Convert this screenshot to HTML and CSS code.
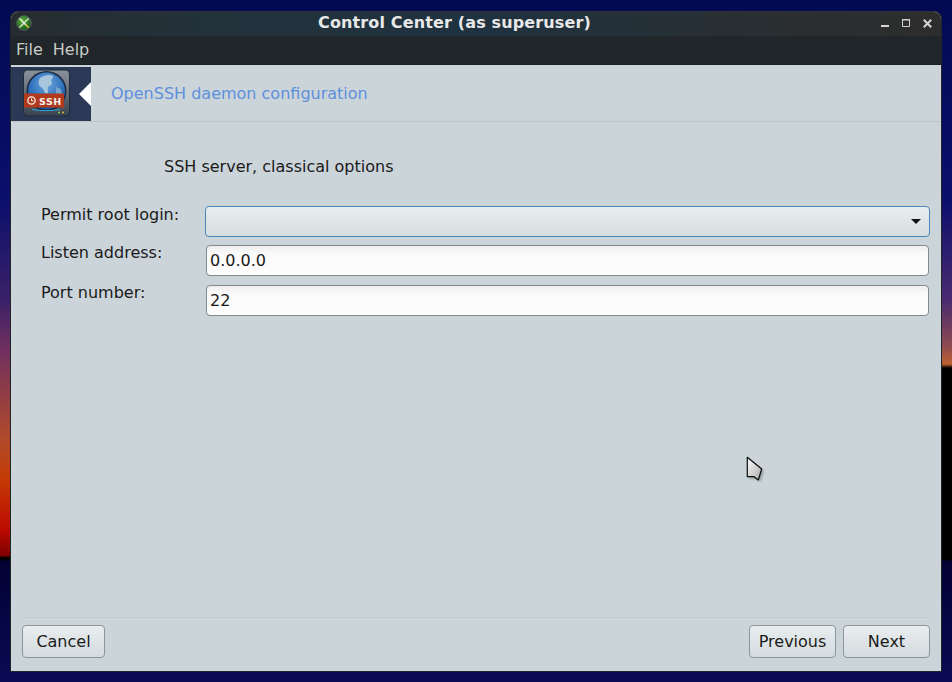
FILE: index.html
```html
<!DOCTYPE html>
<html lang="en">
<head>
<meta charset="utf-8">
<title>Control Center (as superuser)</title>
<link rel="stylesheet" href="styles.css">
</head>
<body>
<div class="desktop">
  <div class="window">
    <div class="titlebar">
      <svg class="app-icon" width="16" height="16" viewBox="0 0 16 16">
        <defs><radialGradient id="g" cx="0.4" cy="0.35" r="0.7"><stop offset="0" stop-color="#58b83a"/><stop offset="1" stop-color="#0f4d10"/></radialGradient></defs>
        <circle cx="8" cy="8" r="7.2" fill="url(#g)" stroke="#5a6a60"/>
        <path d="M3.500 3.500 10 10" stroke="#e4e6dc" stroke-width="1.700"/>
        <path d="M10 10 12.500 12.500" stroke="#e2c63a" stroke-width="1.700"/>
        <path d="M12.500 3.500 3.500 12.500" stroke="#dfe2d8" stroke-width="1.500"/>
      </svg>
      <div class="title">Control Center (as superuser)</div>
      <div class="win-buttons">
        <svg width="9" height="9" viewBox="0 0 9 9"><path d="M0 6h8v2H0z" fill="#d4d4d0"/></svg>
        <svg width="9" height="9" viewBox="0 0 9 9"><path d="M.5.5h7v7h-7z" fill="none" stroke="#d4d4d0"/><path d="M0 0h8v1.500H0z" fill="#d4d4d0"/></svg>
        <svg width="9" height="9" viewBox="0 0 9 9"><path d="M.8.800 8.200 8.200M8.200.800 .8 8.200" stroke="#d4d4d0" stroke-width="2"/></svg>
      </div>
    </div>
    <div class="menubar"><span class="menu-item">File</span><span class="menu-item">Help</span></div>
    <div class="banner">
      <div class="banner-logo">
        <svg width="50" height="50" viewBox="0 0 50 50">
          <defs>
            <radialGradient id="globe" cx="0.5" cy="0.3" r="0.8"><stop offset="0" stop-color="#6fa8e0"/><stop offset="0.6" stop-color="#2a6cb8"/><stop offset="1" stop-color="#123f7e"/></radialGradient>
            <linearGradient id="dev" x1="0" y1="0" x2="0" y2="1"><stop offset="0" stop-color="#8a929c"/><stop offset="0.6" stop-color="#5a6470"/><stop offset="1" stop-color="#39424f"/></linearGradient>
          </defs>
          <rect x="0.500" y="1" width="46" height="46" rx="4" fill="url(#dev)" stroke="#1f2a3a"/>
          <circle cx="23.500" cy="22" r="20" fill="#1c2c42"/>
          <circle cx="23.500" cy="22" r="18.500" fill="url(#globe)"/>
          <path d="M17 9c4-3 10-4 13-2 1 2-2 3-2 5 2 2 1 4-2 5-2 1-1 3-1 7h-3c-1-3-2-5-4-6-3-2-3-6-1-9z" fill="#a9c6dc"/>
          <path d="M33 18l5 2 1 5h-6z" fill="#8fb4d4" opacity=".7"/>
          <rect x="1" y="24.500" width="40" height="14" fill="#b23a1c"/>
          <circle cx="8.500" cy="31.500" r="3.700" fill="none" stroke="#f4ece8" stroke-width="1.300"/>
          <path d="M8.500 29.500v2.300h2" fill="none" stroke="#f4ece8"/>
          <text x="16" y="35.500" class="ssh-text">SSH</text>
          <path d="M9 40.500c8 1.500 20 1.500 28 0" stroke="#2ea8dc" stroke-width="1" fill="none"/>
          <circle cx="36" cy="43.500" r="1" fill="#7ad04a"/>
          <circle cx="40" cy="43.500" r="1" fill="#e8b030"/>
        </svg>
        <div class="notch"></div>
      </div>
      <div class="banner-title">OpenSSH daemon configuration</div>
    </div>
    <div class="content">
      <div class="section-title">SSH server, classical options</div>
      <div class="form">
        <label class="lbl lbl-1">Permit root login:</label>
        <div class="combo"><span class="caret"></span></div>
        <label class="lbl lbl-2">Listen address:</label>
        <div class="input">0.0.0.0</div>
        <label class="lbl lbl-2">Port number:</label>
        <div class="input">22</div>
      </div>
    </div>
    <div class="footer">
      <button class="btn btn-cancel">Cancel</button>
      <div class="spacer"></div>
      <button class="btn btn-prev">Previous</button>
      <button class="btn btn-next">Next</button>
    </div>
  </div>
  <svg class="cursor" width="22" height="30" viewBox="0 0 22 30">
    <defs>
      <linearGradient id="cur" x1="0" y1="0" x2="1" y2="1"><stop offset="0" stop-color="#fff"/><stop offset="1" stop-color="#a8a8a8"/></linearGradient>
      <filter id="blur" x="-30%" y="-30%" width="160%" height="160%"><feGaussianBlur stdDeviation="1.200"/></filter>
    </defs>
    <path d="M3.300 3.300 17.700 15 14.300 26 10 22.700H3.300z" fill="#5d676c" opacity=".55" filter="url(#blur)"/>
    <path d="M1.300 1.300 15.700 13 12.300 24 8 20.700H1.300z" fill="url(#cur)" stroke="#0c0c0c" stroke-width="1.200" stroke-linejoin="round"/>
  </svg>
</div>
</body>
</html>
```
FILE: styles.css
```css
* { box-sizing: border-box; }
html, body { margin: 0; height: 100%; overflow: hidden; }
body { font-family: "DejaVu Sans", sans-serif; font-size: 16px; color: #1a1a1a; }
.desktop {
  position: relative;
  width: 952px;
  height: 682px;
  padding: 11px 10px 10px;
  background-color: #0a0a4a;
  background-image:
    linear-gradient(#020a52 0, #0b0f6c 200px, #3a2168 300px, #70305f 350px, #b14a2a 440px, #c43a05 480px, #bb0a00 530px, #7c0000 556px, #000 557px, #000 560px, #020233 561px, #0a0a55 682px),
    linear-gradient(#020a52 0, #0b0f6c 200px, #4a2a70 300px, #8a4a50 345px, #c06030 364px, #000 368px, #000 560px, #020233 561px, #0a0a55 682px);
  background-size: 50% 100%, 50% 100%;
  background-position: left top, right top;
  background-repeat: no-repeat;
}
.window {
  height: 661px;
  display: flex;
  flex-direction: column;
  border: 1px solid #222628;
  border-top-color: #2e3234;
  border-radius: 8px 8px 0 0;
  overflow: hidden;
  background: #cbd4d9;
}
.titlebar {
  flex: none;
  height: 24px;
  display: flex;
  align-items: flex-start;
  position: relative;
  padding: 3px 9px 0 5px;
  background: linear-gradient(90deg, #262d31 0, #22323c 25%, #1f3240 50%, #2a2e30 85%, #2d2d2d 100%);
}
.app-icon { flex: none; }
.title {
  position: absolute;
  left: 0; right: 43px; top: 0;
  line-height: 21px;
  text-align: center;
  font-weight: bold;
  font-size: 16px;
  letter-spacing: .14px;
  color: #e8e8e8;
}
.win-buttons { margin-left: auto; margin-top: 4px; display: flex; gap: 12px; position: relative; }
.win-buttons svg { display: block; }
.menubar {
  flex: none;
  height: 29px;
  display: flex;
  align-items: center;
  gap: 10px;
  padding: 0 5px;
  background: #202629;
  border-bottom: 1px solid #1a1e20;
  color: #c8ccc6;
}
.menu-item { line-height: 26px; }
.banner {
  flex: none;
  height: 57px;
  display: flex;
  background: #cbd4d9;
  border-bottom: 1px solid #bfc9c4;
}
.banner-logo {
  position: relative;
  flex: none;
  width: 80px;
  height: 54px;
  margin-top: 2px;
  padding: 2px 0 0 12px;
  background: #2b3956;
}
.banner-logo svg { display: block; }
.notch {
  position: absolute;
  right: 0;
  top: 15px;
  border: 12px solid transparent;
  border-right-color: #fff;
  border-left-width: 0;
}
.ssh-text { font: bold 9.500px "DejaVu Sans", sans-serif; fill: #f6f0ec; letter-spacing: .5px; }
.banner-title { padding: 19px 0 0 20px; color: #5e8fdc; line-height: 20px; }
.content { flex: 1; min-height: 0; padding: 35px 12px 0 30px; }
.section-title { padding-left: 123px; line-height: 20px; }
.form {
  display: grid;
  grid-template-columns: 165px 1fr;
  grid-template-rows: 31px 31px 31px;
  row-gap: 9px;
  margin-top: 28px;
}
.lbl { line-height: 20px; }
.lbl-2 { margin-top: -2px; }
.combo {
  height: 31px;
  margin: 1px -1px 0;
  position: relative;
  border: 1px solid #4a86bc;
  border-radius: 4px;
  background: linear-gradient(#e9edee, #d5dde0);
}
.caret {
  position: absolute;
  right: 8px;
  top: 12px;
  border: 5px solid transparent;
  border-top: 5px solid #111;
  border-bottom-width: 0;
}
.input {
  height: 31px;
  padding-left: 3px;
  line-height: 29px;
  font-size: 16px;
  border: 1px solid #7f8c90;
  border-radius: 4px;
  background: linear-gradient(#eeeeee, #fafafa 25%, #fdfdfd);
}
.footer {
  flex: none;
  height: 54px;
  margin: 0 11px;
  padding-top: 7px;
  display: flex;
  align-items: flex-start;
  gap: 7px;
  border-top: 1px solid #bfc9c9;
}
.spacer { flex: 1; }
.btn {
  height: 33px;
  padding: 0;
  font: 16px "DejaVu Sans", sans-serif;
  color: #1a1a1a;
  border: 1px solid #8b979b;
  border-radius: 4px;
  background: linear-gradient(#e9edef, #d3dbde);
}
.btn-cancel { width: 83px; }
.btn-prev { width: 87px; }
.btn-next { width: 87px; }
.cursor { position: absolute; left: 746px; top: 456px; }
```
